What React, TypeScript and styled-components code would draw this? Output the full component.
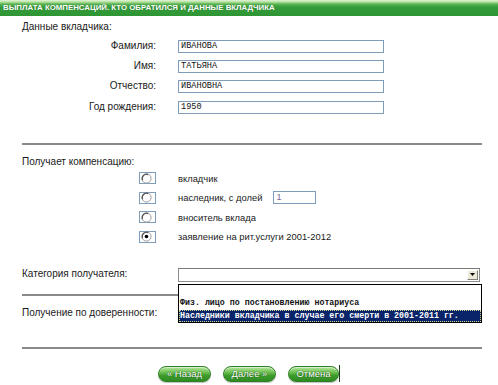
import React from 'react';
import styled, { createGlobalStyle } from 'styled-components';

const Global = createGlobalStyle`
  html, body { margin: 0; padding: 0; background: #fff; }
  body {
    font-family: "Liberation Sans", Arial, sans-serif;
    font-size: 10px;
    color: #1a1a1a;
  }
`;

const Page = styled.div`
  width: 498px;
  height: 385px;
  overflow: hidden;
  position: relative;
`;

const Header = styled.div`
  height: 16px;
  background: linear-gradient(#e4f4da 0px, #b3e09e 2px, #5db555 4px, #369c3a 7px, #2e9535 100%);
  color: #fff;
  font-weight: bold;
  font-size: 7.85px;
  line-height: 16px;
  padding-left: 3px;
  white-space: nowrap;
  text-shadow: 0 0 1px #1f6b22;
`;

const Content = styled.div`
  padding: 0 16px 0 22px;
  display: flex;
  flex-direction: column;
`;

const SectionTitle = styled.div<{ $mt: number; $lh?: number }>`
  margin-top: ${(p) => p.$mt}px;
  line-height: ${(p) => p.$lh ?? 14}px;
`;

const FieldGrid = styled.div<{ $mt: number }>`
  margin-top: ${(p) => p.$mt}px;
  display: flex;
  flex-direction: column;
`;

const Row = styled.div<{ $h: number }>`
  height: ${(p) => p.$h}px;
  display: grid;
  grid-template-columns: 134px auto;
  column-gap: 22px;
  align-items: center;
`;

const Label = styled.div<{ $left?: boolean }>`
  text-align: ${(p) => (p.$left ? 'left' : 'right')};
  white-space: nowrap;
  padding-bottom: 2px;
`;

const TextInput = styled.div<{ $w: number }>`
  box-sizing: border-box;
  width: ${(p) => p.$w}px;
  height: 13px;
  border: 1px solid #7f9db9;
  background: #fff;
  font-family: "Liberation Mono", "Courier New", monospace;
  font-size: 8.6px;
  line-height: 11px;
  padding-left: 2px;
  color: #111;
  white-space: nowrap;
  overflow: hidden;
`;

const SmallInput = styled(TextInput)`
  font-family: "Liberation Sans", Arial, sans-serif;
  font-size: 9px;
  color: #7a6a9a;
  margin-left: 11px;
`;

const Rule = styled.div<{ $mt: number }>`
  margin-top: ${(p) => p.$mt}px;
  height: 2px;
  background: #8a8a8a;
`;

const RadioCell = styled.div`
  display: flex;
  justify-content: flex-end;
`;

const RadioBox = styled.div`
  box-sizing: border-box;
  width: 17px;
  height: 12px;
  border: 1px solid #7f9db9;
  background: #fff;
  display: flex;
  align-items: center;
  padding-left: 1px;
`;

const OptionText = styled.div`
  display: flex;
  align-items: center;
  font-size: 9.4px;
  white-space: nowrap;
`;

const SelectWrap = styled.div`
  position: relative;
  width: 302px;
`;

const SelectBox = styled.div`
  box-sizing: border-box;
  width: 302px;
  height: 14px;
  border: 1px solid #8d8d8d;
  border-top-color: #7a7a7a;
  background: #fff;
  display: flex;
  justify-content: flex-end;
  align-items: stretch;
  padding: 1px;
`;

const ArrowBtn = styled.div`
  width: 11px;
  box-sizing: border-box;
  background: #ece9d8;
  border: 1px solid;
  border-color: #fff #808080 #808080 #fff;
  display: flex;
  align-items: center;
  justify-content: center;
`;

const DropList = styled.div`
  position: absolute;
  left: 0;
  top: 16px;
  width: 304px;
  box-sizing: border-box;
  border: 1px solid #000;
  background: #fff;
  z-index: 2;
`;

const DropItem = styled.div<{ $active?: boolean }>`
  height: 12.3px;
  line-height: 12px;
  font-family: "Liberation Mono", "Courier New", monospace;
  font-size: 8.3px;
  font-weight: bold;
  white-space: nowrap;
  padding-left: 1px;
  color: ${(p) => (p.$active ? '#fff' : '#111')};
  background: ${(p) => (p.$active ? '#0a246a' : '#fff')};
  outline: ${(p) => (p.$active ? '1px dotted #d8d890' : 'none')};
  outline-offset: -1px;
`;

const ButtonBar = styled.div`
  margin-top: 16px;
  padding-left: 136px;
  display: flex;
  align-items: center;
  gap: 12px;
`;

const GreenButton = styled.div<{ $w: number }>`
  width: ${(p) => p.$w}px;
  height: 16px;
  box-sizing: border-box;
  border-radius: 8px;
  border: 1px solid #2c7f22;
  background: linear-gradient(#b7e6a0 0%, #74c457 35%, #3e9c2c 60%, #2f8b22 100%);
  box-shadow: inset 0 1px 0 rgba(255, 255, 255, 0.5), 0 1px 1px rgba(0, 0, 0, 0.25);
  color: #fff;
  font-size: 9.5px;
  line-height: 14px;
  text-align: center;
  white-space: nowrap;
  text-shadow: 0 0 1px #1e5a16, 0 0 1px #1e5a16;
`;

const Caret = styled.div`
  width: 1px;
  height: 17px;
  background: #1f3d1a;
  margin-left: -12px;
`;

const Radio = ({ checked }: { checked?: boolean }) => (
  <RadioBox>
    <svg width="11" height="11" viewBox="0 0 11 11">
      <circle cx="5.5" cy="5.5" r="4.6" fill="#fff" stroke="#9a9a9a" strokeWidth="1" />
      <path d="M1.6 7.2 A4.3 4.3 0 0 1 7.2 1.6" fill="none" stroke="#555" strokeWidth="1.2" />
      {checked && <circle cx="5.5" cy="5.5" r="1.8" fill="#000" />}
    </svg>
  </RadioBox>
);

const fields = [
  { label: 'Фамилия:', value: 'ИВАНОВА' },
  { label: 'Имя:', value: 'ТАТЬЯНА' },
  { label: 'Отчество:', value: 'ИВАНОВНА' },
  { label: 'Год рождения:', value: '1950' },
];

export default function App() {
  return (
    <Page>
      <Global />
      <Header>ВЫПЛАТА КОМПЕНСАЦИЙ. КТО ОБРАТИЛСЯ И ДАННЫЕ ВКЛАДЧИКА</Header>
      <Content>
        <SectionTitle $mt={4}>Данные вкладчика:</SectionTitle>
        <FieldGrid $mt={2}>
          {fields.map((f) => (
            <Row $h={20.4} key={f.label}>
              <Label>{f.label}</Label>
              <TextInput $w={206}>{f.value}</TextInput>
            </Row>
          ))}
        </FieldGrid>
        <Rule $mt={25.4} />
        <SectionTitle $mt={11.5} $lh={12}>Получает компенсацию:</SectionTitle>
        <FieldGrid $mt={0}>
          <Row $h={19.5}>
            <RadioCell><Radio /></RadioCell>
            <OptionText>вкладчик</OptionText>
          </Row>
          <Row $h={19.5}>
            <RadioCell><Radio /></RadioCell>
            <OptionText>
              наследник, с долей
              <SmallInput $w={43}>1</SmallInput>
            </OptionText>
          </Row>
          <Row $h={19.5}>
            <RadioCell><Radio /></RadioCell>
            <OptionText>вноситель вклада</OptionText>
          </Row>
          <Row $h={19.5}>
            <RadioCell><Radio checked /></RadioCell>
            <OptionText>заявление на рит.услуги 2001-2012</OptionText>
          </Row>
        </FieldGrid>
        <FieldGrid $mt={18.5}>
          <Row $h={20}>
            <Label $left>Категория получателя:</Label>
            <SelectWrap>
              <SelectBox>
                <ArrowBtn>
                  <svg width="5" height="3" viewBox="0 0 5 3">
                    <path d="M0 0 H5 L2.5 3 Z" fill="#000" />
                  </svg>
                </ArrowBtn>
              </SelectBox>
              <DropList>
                <DropItem>&nbsp;</DropItem>
                <DropItem>Физ. лицо по постановлению нотариуса</DropItem>
                <DropItem $active>Наследники вкладчика в случае его смерти в 2001-2011 гг.</DropItem>
              </DropList>
            </SelectWrap>
          </Row>
        </FieldGrid>
        <Rule $mt={9.5} />
        <SectionTitle $mt={10}>Получение по доверенности:</SectionTitle>
        <Rule $mt={27} />
        <ButtonBar>
          <GreenButton $w={53}>« Назад</GreenButton>
          <GreenButton $w={53}>Далее »</GreenButton>
          <GreenButton $w={51}>Отмена</GreenButton>
          <Caret />
        </ButtonBar>
      </Content>
    </Page>
  );
}
